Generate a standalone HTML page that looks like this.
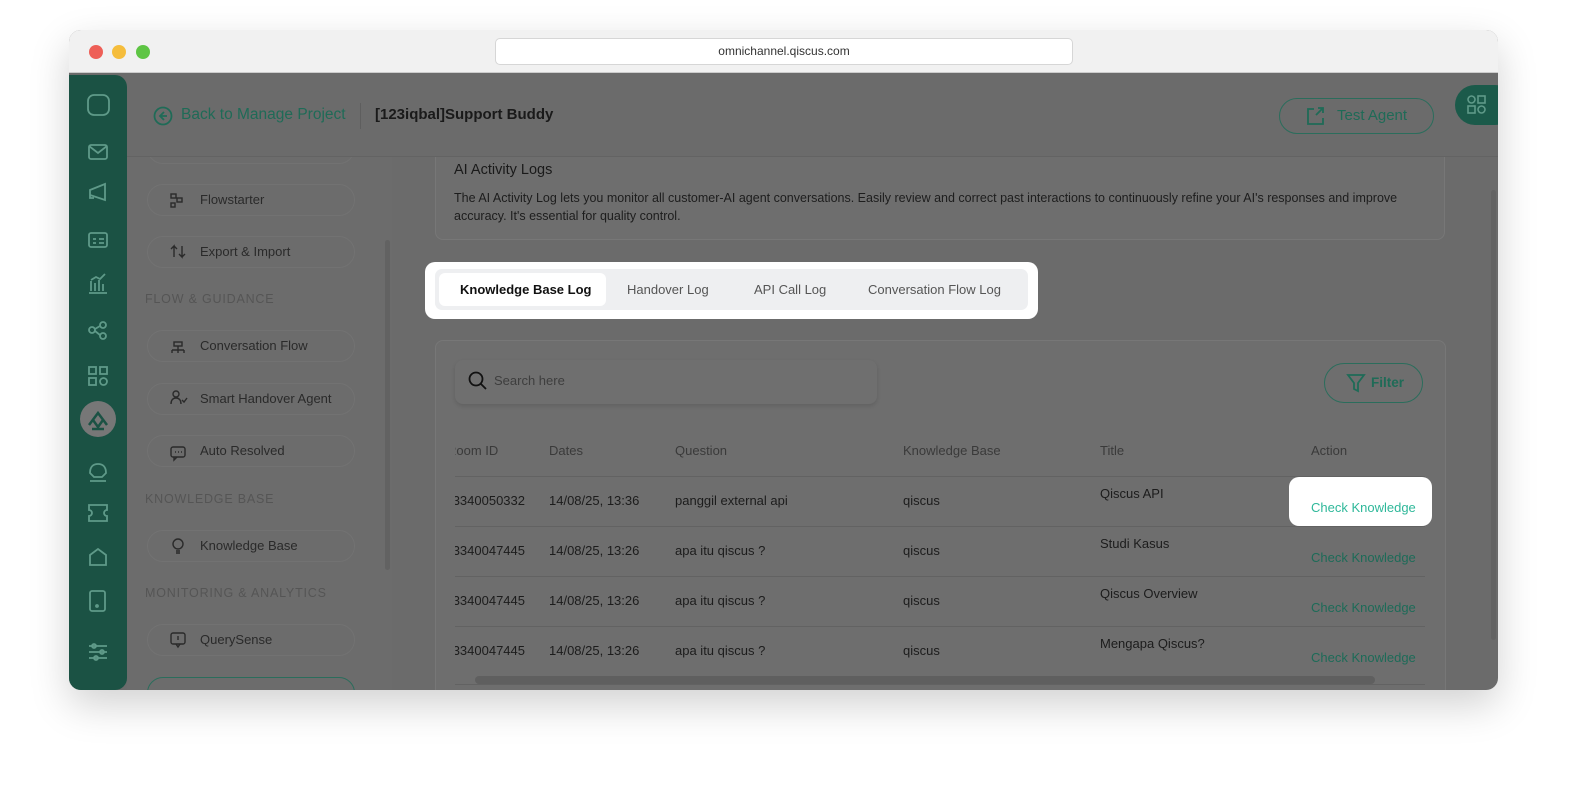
<!DOCTYPE html>
<html><head><style>
*{box-sizing:border-box;margin:0;padding:0}
body{width:1580px;height:805px;background:#fff;font-family:"Liberation Sans",sans-serif;position:relative;overflow:hidden}
.a{position:absolute}
.win{left:69px;top:30px;width:1429px;height:660px;border-radius:12px;overflow:hidden;box-shadow:0 15px 40px rgba(0,0,0,.18);background:#6b6b6b}
.tb{left:0;top:0;width:1429px;height:43px;background:#f1f1f1;border-bottom:1px solid #ccc;z-index:9}
.dot{width:14px;height:14px;border-radius:50%;top:15px}
.url{left:426px;top:8px;width:578px;height:27px;background:#fff;border:1px solid #d6d6d6;border-radius:5px;font-size:12px;color:#333;text-align:center;line-height:25px}
.side{left:0;top:45px;width:58px;height:615px;background:#1b5244;border-radius:0 12px 12px 0;z-index:8}
.nav{left:58px;top:43px;width:265px;height:617px;background:#6c6c6c}
.hdr{left:58px;top:43px;width:1371px;height:84px;background:#6b6b6b;border-bottom:1px solid #636363;z-index:5}
.hz{z-index:6}
.pill{left:78px;width:208px;height:32px;border:1px solid #727272;border-radius:16px;color:#2a2a2a;font-size:13px;line-height:30px;padding-left:52px}
.sec{left:76px;font-size:12.5px;color:#555;letter-spacing:.8px}
.card{background:#6e6e6e;border:1px solid #777;border-radius:8px}
.th{font-size:13px;color:#3a3a3a;top:413px}
.td{font-size:13px;color:#1c1c1c}
.row{left:386px;width:970px;height:1px;background:#626262}
.ck{color:#1d6b58;font-size:13px}
svg{position:absolute}
</style></head><body>
<div class="a win">
 <div class="a tb">
  <div class="a dot" style="left:20px;background:#ee5f57"></div>
  <div class="a dot" style="left:43px;background:#f5bd3c"></div>
  <div class="a dot" style="left:67px;background:#5ec544"></div>
  <div class="a url">omnichannel.qiscus.com</div>
 </div>
 <div class="a nav"></div>
 <div class="a" style="left:316px;top:210px;width:5px;height:330px;background:#626262;border-radius:3px"></div>
 <div class="a" style="left:1422px;top:160px;width:5px;height:450px;background:#636363;border-radius:3px"></div>
 <div class="a hdr"></div>
 <div class="a side">
  <svg width="58" height="615" fill="none" stroke="#5f9a89" stroke-width="1.8">
   <rect x="19" y="20" width="21" height="20" rx="6"/>
   <rect x="20" y="70" width="18" height="14" rx="2"/><path d="M20 71l9 7 9-7"/>
   <path d="M21 115l15-6v16l-15-5zM21 115v8h4"/>
   <rect x="20" y="158" width="18" height="14" rx="2"/><path d="M24 164h3M24 168h3M30 164h5M30 168h5"/>
   <path d="M20 218h18M22 216v-10M26 216v-8M30 216v-11M34 216v-7M22 205l5-3 4 2 5-5"/>
   <circle cx="23" cy="255" r="3"/><circle cx="34" cy="250" r="3"/><circle cx="34" cy="261" r="3"/><path d="M26 254l5-3M26 256l5 4"/>
   <rect x="20" y="292" width="7" height="7"/><rect x="31" y="292" width="7" height="7"/><rect x="20" y="303" width="7" height="7"/><circle cx="34.5" cy="306.5" r="3.5"/>
   <path d="M21 398c0-6 3-9 8-9s8 3 8 9l-4 4h-8zM21 406h16"/>
   <path d="M20 430h18v5a3 3 0 000 6v5H20v-5a3 3 0 000-6z"/>
   <path d="M21 480l8-6 8 6v10H21z"/>
   <rect x="21" y="516" width="15" height="20" rx="2"/><circle cx="28" cy="531" r="1"/>
   <path d="M20 571h18M20 577h18M20 583h18"/><circle cx="25" cy="571" r="2"/><circle cx="33" cy="577" r="2"/><circle cx="27" cy="583" r="2"/>
  </svg>
  <div class="a" style="left:11px;top:326px;width:36px;height:36px;border-radius:50%;background:#777"></div>
  <svg width="58" height="615" style="left:0;top:0" fill="none" stroke="#1b5244" stroke-width="2.5"><path d="M20 350l9-12 9 12M24 345l5 7 5-7M23 354h12"/></svg>
 </div>
 <!-- header -->
 <svg class="hz" width="20" height="20" style="left:84px;top:76px" fill="none" stroke="#1f6b57" stroke-width="1.8"><circle cx="10" cy="10" r="8.5"/><path d="M11 6l-4 4 4 4M7 10h7"/></svg>
 <div class="a hz" style="left:112px;top:76px;font-size:15.5px;color:#1f6b57">Back to Manage Project</div>
 <div class="a hz" style="left:291px;top:73px;width:1px;height:26px;background:#5e5e5e"></div>
 <div class="a hz" style="left:306px;top:76px;font-size:15px;color:#1a1a1a;font-weight:bold">[123iqbal]Support Buddy</div>
 <div class="a hz" style="left:1210px;top:68px;width:155px;height:36px;border:1.5px solid #2b6d5c;border-radius:18px;color:#1f6b57;font-size:15px;line-height:33px;padding-left:57px">Test Agent</div>
 <svg class="hz" width="20" height="20" style="left:1236px;top:76px" fill="none" stroke="#1f6b57" stroke-width="1.8"><path d="M9 3H3v15h15v-6M11 9l7-7M13 2h5v5"/></svg>
 <div class="a hz" style="left:1386px;top:55px;width:60px;height:40px;border-radius:20px;background:#1b5a4a"></div>
 <svg class="hz" width="20" height="20" style="left:1398px;top:65px" fill="none" stroke="#5f9a89" stroke-width="1.6"><circle cx="4.5" cy="4.5" r="3.5"/><rect x="11" y="1" width="7" height="7"/><rect x="1" y="11" width="7" height="7"/><circle cx="14.5" cy="14.5" r="3.5"/></svg>
 <!-- nav -->
 <div class="a pill" style="top:98px;height:36px"></div>
 <div class="a pill" style="top:154px">Flowstarter</div>
 <div class="a pill" style="top:206px">Export &amp; Import</div>
 <div class="a sec" style="top:262px">FLOW &amp; GUIDANCE</div>
 <div class="a pill" style="top:300px">Conversation Flow</div>
 <div class="a pill" style="top:353px">Smart Handover Agent</div>
 <div class="a pill" style="top:405px">Auto Resolved</div>
 <div class="a sec" style="top:462px">KNOWLEDGE BASE</div>
 <div class="a pill" style="top:500px">Knowledge Base</div>
 <div class="a sec" style="top:556px">MONITORING &amp; ANALYTICS</div>
 <div class="a pill" style="top:594px">QuerySense</div>
 <div class="a pill" style="top:647px;border-color:#2b6d5c"></div>
 <svg width="20" height="500" style="left:100px;top:160px" fill="none" stroke="#2a2a2a" stroke-width="1.4">
  <g transform="translate(0,1)"><rect x="2" y="3" width="5" height="4"/><rect x="8" y="7" width="5" height="4"/><rect x="2" y="12" width="4" height="4"/></g>
  <g transform="translate(0,10)"><path d="M5 57v-11l-3 3M5 46l3 3M13 46v11l-3-3M13 57l3-3"/></g>
  <g transform="translate(0,14)"><rect x="5" y="138" width="8" height="4"/><path d="M9 142v4M3 146h12M3 146v3M9 146v3M15 146v3"/></g>
  <g transform="translate(0,12)"><circle cx="7" cy="192" r="3"/><path d="M2 202c0-4 2-6 5-6s5 2 5 6M13 198l2 2 3-4"/></g>
  <g transform="translate(0,12)"><rect x="2" y="245" width="14" height="10" rx="2"/><path d="M5 255v3l3-3M6 250h1M9 250h1M12 250h1"/></g>
  <g transform="translate(0,10)"><circle cx="9" cy="344" r="5"/><path d="M7 351h4M7 353h4"/></g>
  <g transform="translate(0,9)"><rect x="2" y="434" width="14" height="11" rx="2"/><path d="M7 445l2 3 2-3M9 437v4"/></g>
 </svg>
 <!-- top card -->
 <div class="a card" style="left:366px;top:100px;width:1010px;height:110px;border-top:none;border-radius:0 0 8px 8px"></div>
 <div class="a" style="left:385px;top:132px;font-size:14.5px;color:#1a1a1a">AI Activity Logs</div>
 <div class="a" style="left:385px;top:159px;width:975px;font-size:12.5px;line-height:18px;color:#1d1d1d">The AI Activity Log lets you monitor all customer-AI agent conversations. Easily review and correct past interactions to continuously refine your AI's responses and improve accuracy. It's essential for quality control.</div>
 <!-- tabs -->
 <div class="a" style="left:356px;top:232px;width:613px;height:57px;background:#fff;border-radius:10px"></div>
 <div class="a" style="left:366px;top:239px;width:593px;height:41px;background:#eeeff1;border-radius:7px"></div>
 <div class="a" style="left:370px;top:243px;width:167px;height:33px;background:#fff;border-radius:6px"></div>
 <div class="a" style="left:391px;top:252px;font-size:13px;color:#111;font-weight:bold">Knowledge Base Log</div>
 <div class="a" style="left:558px;top:252px;font-size:13px;color:#555">Handover Log</div>
 <div class="a" style="left:685px;top:252px;font-size:13px;color:#555">API Call Log</div>
 <div class="a" style="left:799px;top:252px;font-size:13px;color:#555">Conversation Flow Log</div>
 <!-- table card -->
 <div class="a card" style="left:366px;top:310px;width:1011px;height:360px"></div>
 <div class="a" style="left:386px;top:330px;width:422px;height:44px;background:#6f6f6f;border-radius:8px;box-shadow:0 2px 4px rgba(0,0,0,.12)"></div>
 <svg width="22" height="22" style="left:398px;top:340px" fill="none" stroke="#111" stroke-width="1.8"><circle cx="9" cy="9" r="6.5"/><path d="M14 14l5 5"/></svg>
 <div class="a" style="left:425px;top:343px;font-size:13px;color:#3e3e3e">Search here</div>
 <div class="a" style="left:1255px;top:333px;width:99px;height:40px;border:1.5px solid #2b6d5c;border-radius:20px;color:#1f6b57;font-size:13.5px;font-weight:bold;line-height:37px;padding-left:46px">Filter</div>
 <svg width="20" height="20" style="left:1277px;top:343px" fill="none" stroke="#1f6b57" stroke-width="1.8"><path d="M2 2h16l-6 8v8l-4-2v-6z"/></svg>
 <div class="a" style="left:386px;top:320px;width:970px;height:340px;overflow:hidden">
  <div class="a th" style="left:-8px;top:93px">Room ID</div>
  <div class="a th" style="left:94px;top:93px">Dates</div>
  <div class="a th" style="left:220px;top:93px">Question</div>
  <div class="a th" style="left:448px;top:93px">Knowledge Base</div>
  <div class="a th" style="left:645px;top:93px">Title</div>
  <div class="a th" style="left:856px;top:93px">Action</div>
 </div>
 <div class="a row" style="top:446px"></div>
 <div class="a row" style="top:496px"></div>
 <div class="a row" style="top:546px"></div>
 <div class="a row" style="top:596px"></div>
 <div class="a row" style="top:654px"></div>
 <div class="a td" style="left:386px;top:463px;width:70px;overflow:hidden;direction:rtl">3340050332</div>
 <div class="a td" style="left:480px;top:463px">14/08/25, 13:36</div>
 <div class="a td" style="left:606px;top:463px">panggil external api</div>
 <div class="a td" style="left:834px;top:463px">qiscus</div>
 <div class="a td" style="left:1031px;top:456px">Qiscus API</div>
 <div class="a td" style="left:386px;top:513px;width:70px;overflow:hidden;direction:rtl">3340047445</div>
 <div class="a td" style="left:480px;top:513px">14/08/25, 13:26</div>
 <div class="a td" style="left:606px;top:513px">apa itu qiscus ?</div>
 <div class="a td" style="left:834px;top:513px">qiscus</div>
 <div class="a td" style="left:1031px;top:506px">Studi Kasus</div>
 <div class="a ck" style="left:1242px;top:520px">Check Knowledge</div>
 <div class="a td" style="left:386px;top:563px;width:70px;overflow:hidden;direction:rtl">3340047445</div>
 <div class="a td" style="left:480px;top:563px">14/08/25, 13:26</div>
 <div class="a td" style="left:606px;top:563px">apa itu qiscus ?</div>
 <div class="a td" style="left:834px;top:563px">qiscus</div>
 <div class="a td" style="left:1031px;top:556px">Qiscus Overview</div>
 <div class="a ck" style="left:1242px;top:570px">Check Knowledge</div>
 <div class="a td" style="left:386px;top:613px;width:70px;overflow:hidden;direction:rtl">3340047445</div>
 <div class="a td" style="left:480px;top:613px">14/08/25, 13:26</div>
 <div class="a td" style="left:606px;top:613px">apa itu qiscus ?</div>
 <div class="a td" style="left:834px;top:613px">qiscus</div>
 <div class="a td" style="left:1031px;top:606px">Mengapa Qiscus?</div>
 <div class="a ck" style="left:1242px;top:620px">Check Knowledge</div>
 <div class="a" style="left:406px;top:646px;width:900px;height:8px;border-radius:4px;background:#5f5f5f"></div>
 <div class="a" style="left:1220px;top:447px;width:143px;height:49px;background:#fff;border-radius:10px"></div>
 <div class="a" style="left:1242px;top:470px;font-size:13px;color:#2fb89a">Check Knowledge</div>
</div>
</body></html>
